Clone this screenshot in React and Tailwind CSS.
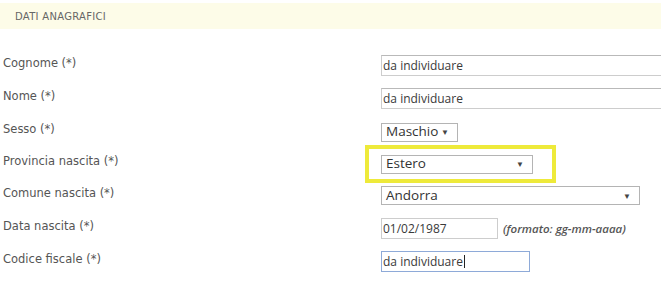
import React from "react";

const labelFont = { fontFamily: '"DejaVu Sans", Verdana, sans-serif' };

const rows = [
    { label: "Cognome (*)", h: "h-[33px]", kind: "text", value: "da individuare" },
    { label: "Nome (*)", h: "h-[33px]", kind: "text", value: "da individuare" },
    { label: "Sesso (*)", h: "h-[34px]", kind: "sesso" },
    { label: "Provincia nascita (*)", h: "h-[30px]", kind: "provincia" },
    { label: "Comune nascita (*)", h: "h-[33px]", kind: "comune" },
    { label: "Data nascita (*)", h: "h-[33px]", kind: "data" },
    { label: "Codice fiscale (*)", h: "h-[33px]", kind: "codice" },
];

function FakeSelect({ value, width }) {
    return (
        <div
            className={`flex h-[19px] items-center justify-between border border-[#b4b4b4] bg-white pl-[4px] pr-[8px] text-[13.5px] text-[#333] font-['Open_Sans',sans-serif] ${width}`}
        >
            <span className="leading-none">{value}</span>
            <span className="text-[8px] leading-none text-[#444]">▼</span>
        </div>
    );
}

function Control({ kind, value }) {
    if (kind === "text") {
        return (
            <div className="flex h-[21px] w-[300px] items-center border border-[#cdcdcd] border-t-[#b9b9b9] bg-white pl-[1px] text-[12px] text-[#3a3a3a] font-['Open_Sans',sans-serif]">
                {value}
            </div>
        );
    }
    if (kind === "sesso") return <FakeSelect value="Maschio" width="w-[77px]" />;
    if (kind === "provincia") {
        return (
            <div className="relative">
                <FakeSelect value="Estero" width="w-[152px]" />
                <span className="pointer-events-none absolute -top-[10px] -bottom-[9px] -left-[16px] -right-[23px] border-[4px] border-[#eeea3a]" />
            </div>
        );
    }
    if (kind === "comune") return <FakeSelect value="Andorra" width="w-[259px]" />;
    if (kind === "data") {
        return (
            <div className="flex items-center gap-[5px]">
                <div className="flex h-[21px] w-[117px] items-center border border-[#cdcdcd] bg-white pl-[1px] text-[12px] text-[#3a3a3a] font-['Open_Sans',sans-serif]">
                    01/02/1987
                </div>
                <span className="text-[11.5px] italic font-semibold text-[#555] font-['Open_Sans',sans-serif]">
                    (formato: gg-mm-aaaa)
                </span>
            </div>
        );
    }
    return (
        <div className="flex h-[21px] w-[149px] items-center border border-[#8eaad8] bg-white pl-[1px] text-[12px] text-[#3a3a3a] font-['Open_Sans',sans-serif]">
            da individuare
            <span className="ml-[1px] h-[13px] w-px bg-[#222]" />
        </div>
    );
}

export default function App() {
    return (
        <div className="h-[306px] w-[661px] overflow-hidden bg-white">
            {/* Header */}
            <div className="mt-[3px] flex h-[26px] items-center bg-[#fdfce8] pl-[15px]">
                <span className="text-[10px] tracking-[0.3px] text-[#666]" style={labelFont}>
                    DATI ANAGRAFICI
                </span>
            </div>

            {/* Form */}
            <div className="mt-[20px]">
                {rows.map((row) => (
                    <div key={row.label} className={`flex items-center ${row.h}`}>
                        <div
                            className="mb-[4px] w-[381px] shrink-0 pl-[3px] text-[11.5px] text-[#555]"
                            style={labelFont}
                        >
                            {row.label}
                        </div>
                        <div className="shrink-0">
                            <Control kind={row.kind} value={row.value} />
                        </div>
                    </div>
                ))}
            </div>
        </div>
    );
}
